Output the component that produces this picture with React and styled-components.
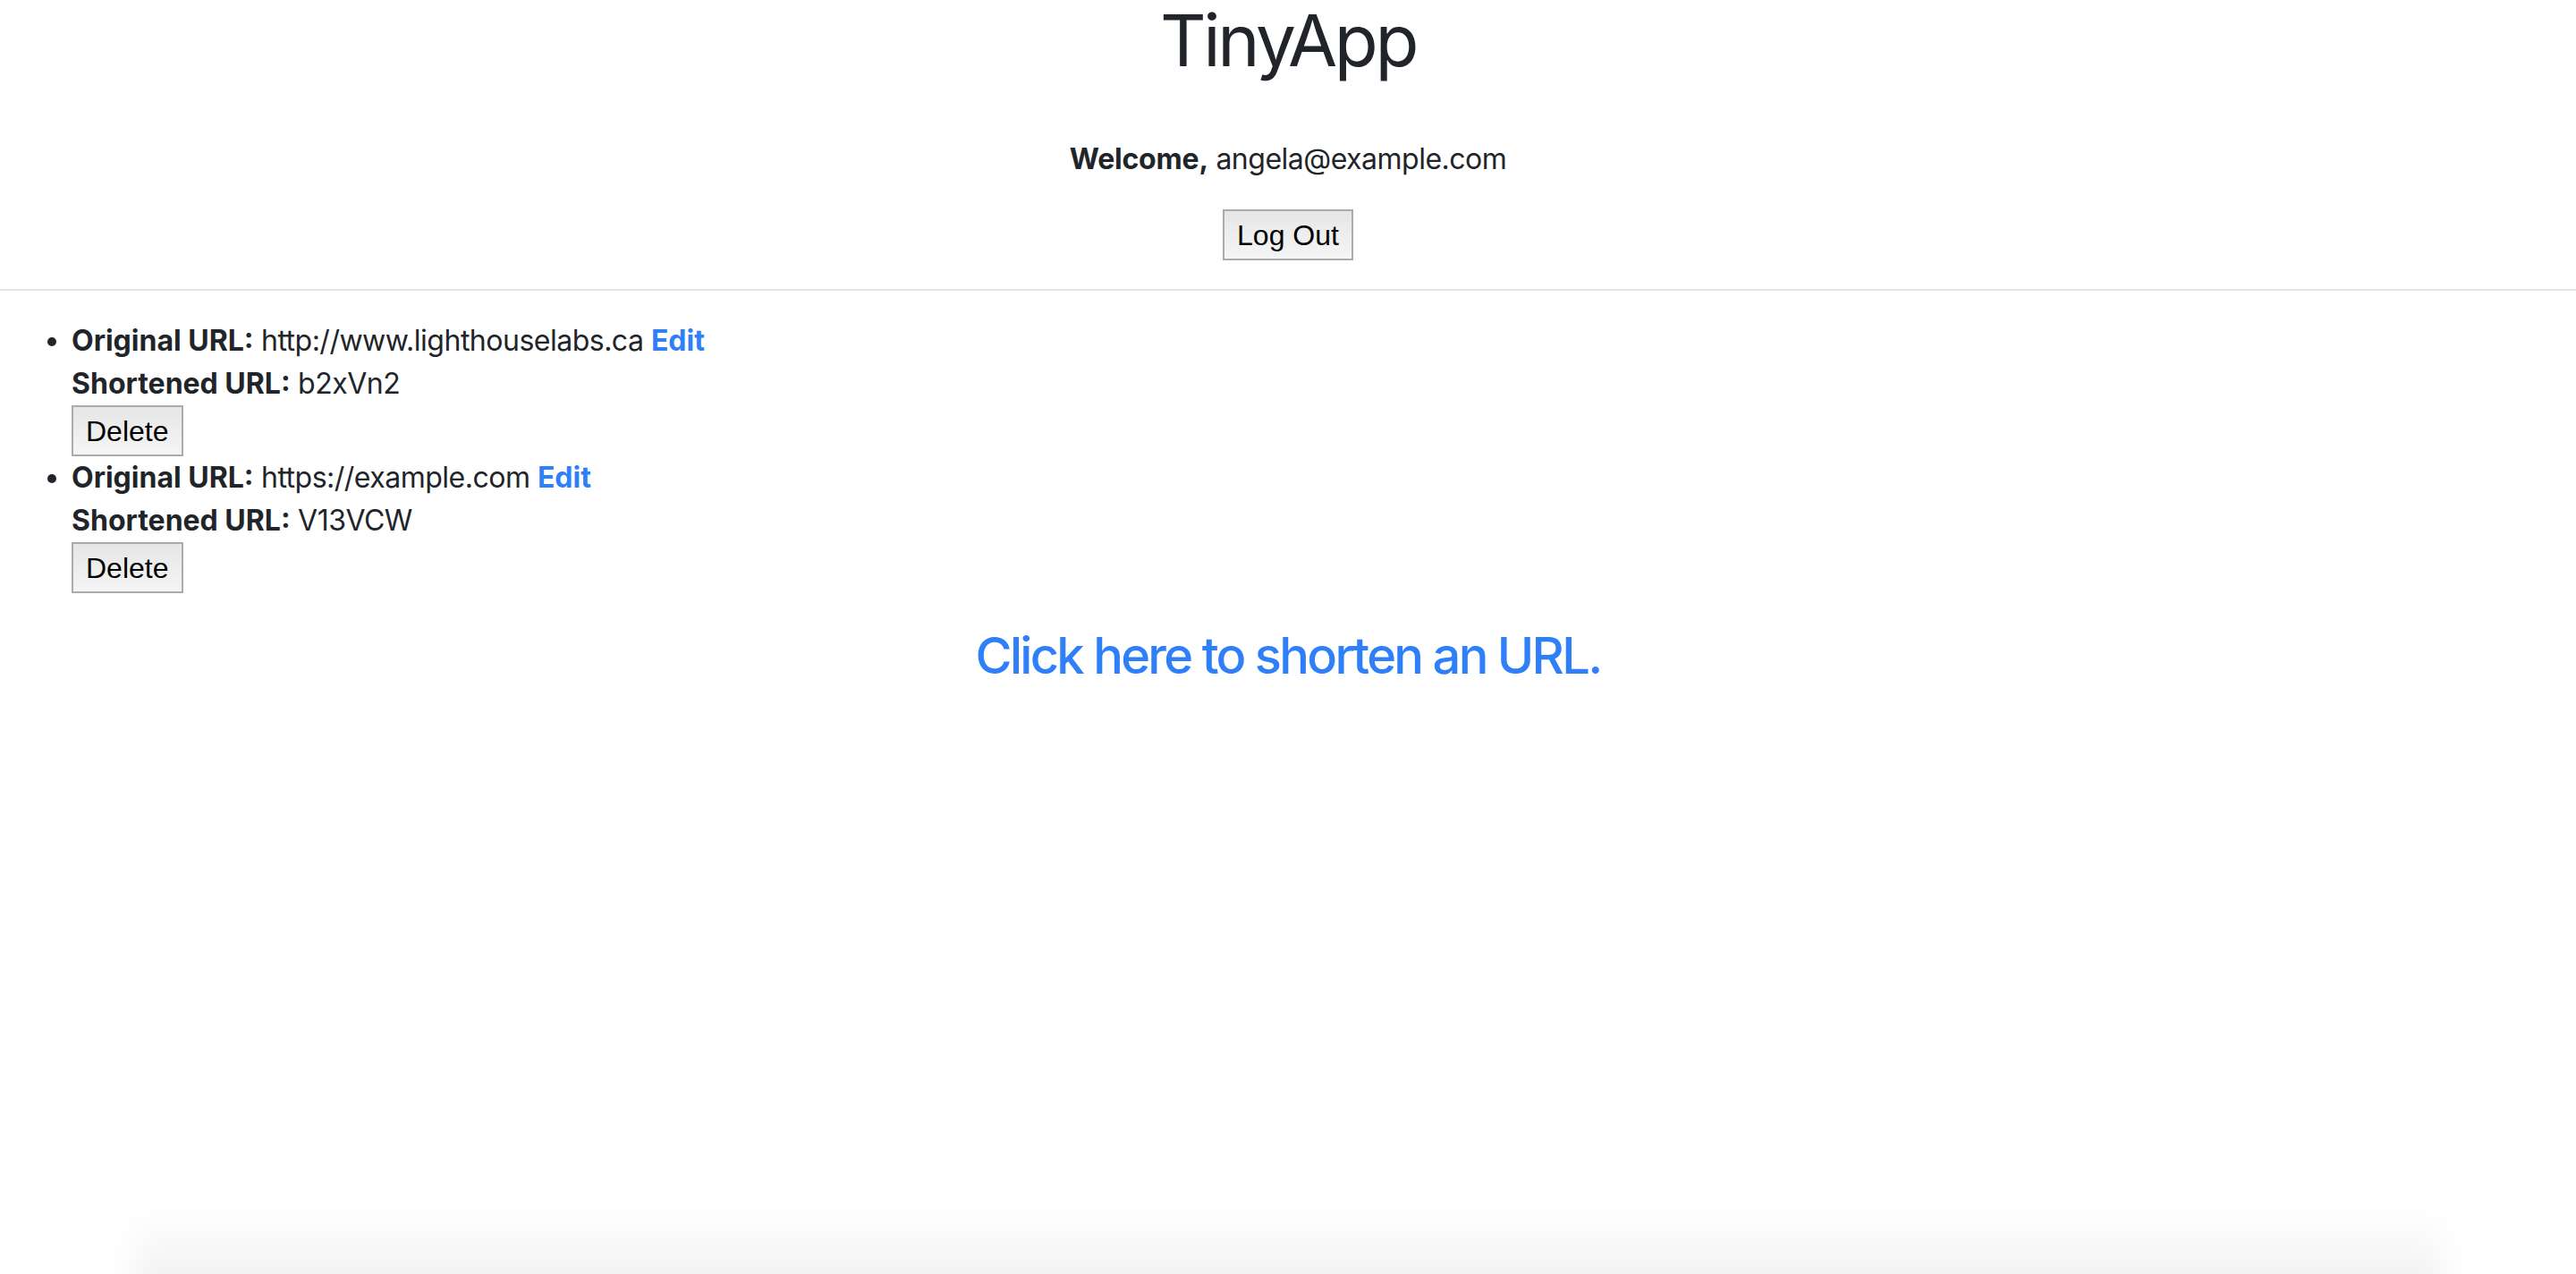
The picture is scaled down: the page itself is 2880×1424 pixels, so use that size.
import styled, { createGlobalStyle } from "styled-components";

const GlobalStyle = createGlobalStyle`
  html, body {
    margin: 0;
    background: #fff;
  }
  body {
    font-family: Inter, "Noto Sans", "Liberation Sans", sans-serif;
    font-size: 32px;
    line-height: 48px;
    letter-spacing: -0.5px;
    color: #212529;
  }
`;

const Page = styled.div`
  min-height: 1424px;
  display: flex;
  flex-direction: column;
`;

const Header = styled.header`
  display: flex;
  flex-direction: column;
  align-items: center;
`;

const Title = styled.h1`
  margin: 0 0 64px;
  font-size: 80px;
  font-weight: 400;
  line-height: 90px;
  letter-spacing: -3.4px;
`;

const Welcome = styled.p`
  margin: 0 0 32px;
  b {
    font-weight: 700;
    letter-spacing: -0.2px;
  }
`;

const Button = styled.button`
  font-family: "Liberation Sans", Arial, sans-serif;
  font-size: 32px;
  line-height: 48px;
  letter-spacing: 0;
  color: #000;
  padding: 3px 14px 2px;
  border: 2px solid #ababab;
  border-radius: 0;
  background: linear-gradient(#e6e6e6, #f5f5f5);
  cursor: pointer;
`;

const Rule = styled.hr`
  margin: 32px 0;
  border: 0;
  border-top: 2px solid #e5e5e5;
`;

const UrlList = styled.ul`
  margin: 0 0 37px;
  padding-left: 80px;
`;

const Item = styled.li`
  b {
    font-weight: 700;
    letter-spacing: 0;
  }
`;

const Form = styled.form`
  margin: 0;
`;

const EditLink = styled.a`
  color: #2f80f8;
  font-weight: 700;
  letter-spacing: 0;
  text-decoration: none;
`;

const NewLink = styled.h3`
  margin: 0;
  text-align: center;
  font-size: 56px;
  line-height: 67px;
  font-weight: 500;
  letter-spacing: -2.7px;
  a {
    color: #2f80f8;
    text-decoration: none;
  }
`;

const DockShadow = styled.div`
  position: fixed;
  left: 150px;
  right: 150px;
  bottom: -40px;
  height: 110px;
  background: linear-gradient(rgba(0, 0, 0, 0), rgba(0, 0, 0, 0.08));
  filter: blur(18px);
  pointer-events: none;
`;

const urls = [
  { id: "b2xVn2", long: "http://www.lighthouselabs.ca" },
  { id: "V13VCW", long: "https://example.com" },
];

export default function App() {
  return (
    <Page>
      <GlobalStyle />
      <Header>
        <Title>TinyApp</Title>
        <Welcome>
          <b>Welcome,</b> angela@example.com
        </Welcome>
        <Form>
          <Button type="button">Log Out</Button>
        </Form>
      </Header>
      <Rule />
      <UrlList>
        {urls.map((u) => (
          <Item key={u.id}>
            <b>Original URL:</b> {u.long} <EditLink href="#">Edit</EditLink>
            <br />
            <b>Shortened URL:</b> {u.id}
            <Form>
              <Button type="button">Delete</Button>
            </Form>
          </Item>
        ))}
      </UrlList>
      <NewLink>
        <a href="#">Click here to shorten an URL.</a>
      </NewLink>
      <DockShadow />
    </Page>
  );
}
